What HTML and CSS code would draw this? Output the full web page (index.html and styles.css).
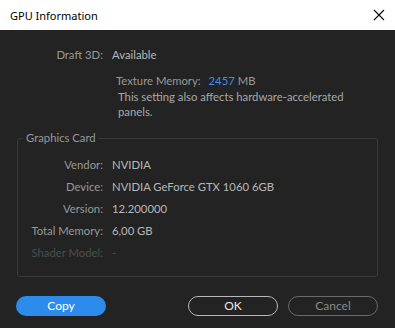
FILE: index.html
```html
<!DOCTYPE html>
<html lang="en">
<head>
    <meta charset="UTF-8">
    <title>GPU Information</title>
    <link rel="stylesheet" href="styles.css">
</head>
<body>
    <div class="dialog">
        <div class="titlebar">
            <span class="title">GPU Information</span>
            <button class="close" aria-label="Close">
                <svg width="12" height="12" viewBox="0 0 12 12"><path d="M1 1L11 11M11 1L1 11" stroke="#000" stroke-width="1.1" fill="none"/></svg>
            </button>
        </div>

        <div class="content">
            <div class="info-row">
                <span class="label">Draft 3D:</span>
                <span class="value">Available</span>
            </div>

            <div class="texture">
                <span class="label">Texture Memory:</span>
                <span class="number">2457</span>
                <span class="label">MB</span>
            </div>
            <p class="note">This setting also affects hardware-accelerated<br>panels.</p>

            <fieldset class="card">
                <legend>Graphics Card</legend>
                <div class="info-row">
                    <span class="label">Vendor:</span>
                    <span class="value">NVIDIA</span>
                </div>
                <div class="info-row">
                    <span class="label">Device:</span>
                    <span class="value">NVIDIA GeForce GTX 1060 6GB</span>
                </div>
                <div class="info-row">
                    <span class="label">Version:</span>
                    <span class="value">12.200000</span>
                </div>
                <div class="info-row">
                    <span class="label">Total Memory:</span>
                    <span class="value">6,00 GB</span>
                </div>
                <div class="info-row disabled">
                    <span class="label">Shader Model:</span>
                    <span class="value">-</span>
                </div>
            </fieldset>

            <div class="buttons">
                <button class="btn btn-primary">Copy</button>
                <span class="spacer"></span>
                <button class="btn btn-ok">OK</button>
                <button class="btn btn-cancel">Cancel</button>
            </div>
        </div>
    </div>
</body>
</html>
```

FILE: styles.css
```css
body {
    margin: 0;
    font-family: Lato, "Open Sans", sans-serif;
    font-size: 11.3px;
    background-color: #232323;
}
.dialog {
    width: 395px;
    height: 328px;
    background-color: #232323;
    overflow: hidden;
}
.titlebar {
    height: 30px;
    background: #fff;
    display: flex;
    align-items: center;
    padding-left: 10px;
}
.title {
    flex: 1;
    color: #000;
    font-family: "Noto Sans", sans-serif;
    font-size: 11px;
}
.close {
    width: 30px;
    height: 30px;
    margin-right: 1px;
    border: none;
    background: none;
    padding: 0;
    display: flex;
    align-items: center;
    justify-content: center;
}
.content {
    padding-top: 17px;
}
.info-row {
    display: flex;
    height: 16px;
    line-height: 16px;
}
.info-row .label {
    width: 103px;
    text-align: right;
    margin-right: 9px;
    color: #999;
    white-space: nowrap;
}
.info-row .value {
    color: #b8b8b8;
}
.card .info-row {
    height: 22px;
    line-height: 22px;
}
.card .info-row .label {
    width: 85px;
}
.info-row.disabled .label,
.info-row.disabled .value {
    color: #4e4e4e;
}
.texture {
    margin: 10px 0 0 116px;
    line-height: 16px;
    color: #999;
}
.texture .number {
    color: #3b8fe8;
    margin-left: 5px;
}
.note {
    margin: 0 0 0 118px;
    line-height: 15px;
    color: #a8a8a8;
}
.card {
    margin: 11px 17px 0;
    padding: 8px 0 12px;
    border: 1px solid #393939;
    border-radius: 3px;
}
.card legend {
    margin-left: 5px;
    padding: 0 3px;
    line-height: 16px;
    color: #999;
}
.buttons {
    display: flex;
    gap: 10px;
    margin: 19px 17px 0 16px;
}
.spacer {
    flex: 1;
}
.btn {
    width: 90px;
    height: 20px;
    border-radius: 10px;
    font-family: inherit;
    font-size: 12px;
    padding: 0;
    line-height: 16px;
}
.btn-primary {
    background: #2d8ceb;
    border: none;
    color: #fff;
}
.btn-ok {
    background: none;
    border: 1px solid #b8b8b8;
    color: #e8e8e8;
}
.btn-cancel {
    background: none;
    border: 1px solid #6a6a6a;
    color: #8a8a8a;
}
```
